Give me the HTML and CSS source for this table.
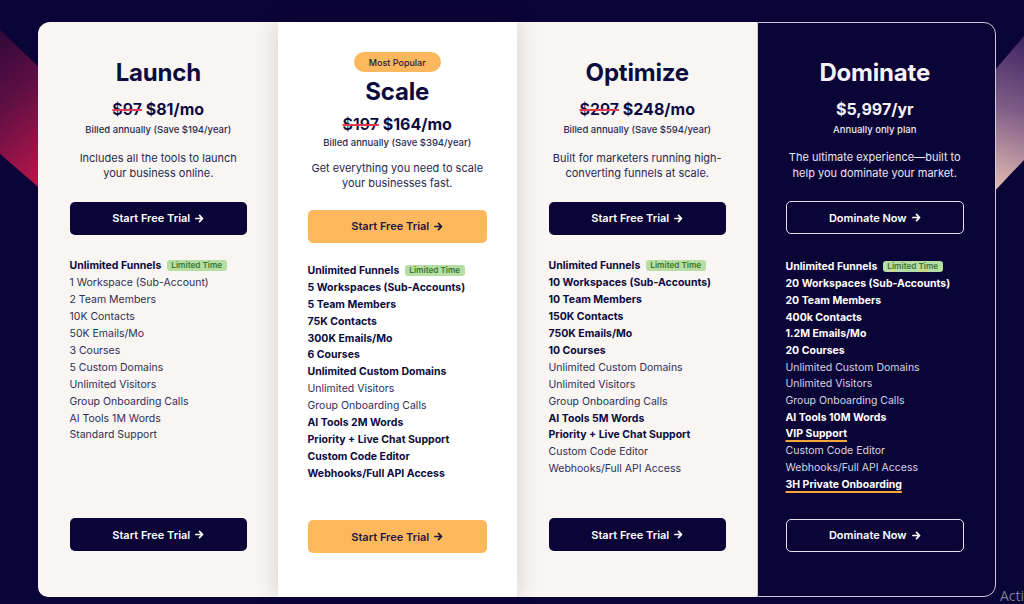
FILE: index.html
```html
<!DOCTYPE html>
<html lang="en">
<head>
<meta charset="utf-8">
<title>Pricing</title>
<link rel="stylesheet" href="styles.css">
</head>
<body>
<div class="deco deco-left"></div>
<div class="deco deco-right"></div>

<main class="plans">
  <section class="plan plan-light">
    <h2 class="plan-title">Launch</h2>
    <p class="price"><s class="old">$97</s> <span class="new">$81/mo</span></p>
    <p class="billed">Billed annually (Save $194/year)</p>
    <p class="desc">Includes all the tools to launch<br>your business online.</p>
    <a class="btn btn-navy" href="#">Start Free Trial <svg class="arrow" viewBox="0 0 10 10"><path d="M1 5h7.2M5 1.6L8.4 5 5 8.4"/></svg></a>
    <ul class="features">
      <li class="b">Unlimited Funnels <span class="badge">Limited Time</span></li>
      <li>1 Workspace (Sub-Account)</li>
      <li>2 Team Members</li>
      <li>10K Contacts</li>
      <li>50K Emails/Mo</li>
      <li>3 Courses</li>
      <li>5 Custom Domains</li>
      <li>Unlimited Visitors</li>
      <li>Group Onboarding Calls</li>
      <li>AI Tools 1M Words</li>
      <li>Standard Support</li>
    </ul>
    <a class="btn btn-navy btn-bottom" href="#">Start Free Trial <svg class="arrow" viewBox="0 0 10 10"><path d="M1 5h7.2M5 1.6L8.4 5 5 8.4"/></svg></a>
  </section>

  <section class="plan plan-popular">
    <span class="pill">Most Popular</span>
    <h2 class="plan-title">Scale</h2>
    <p class="price"><s class="old">$197</s> <span class="new">$164/mo</span></p>
    <p class="billed">Billed annually (Save $394/year)</p>
    <p class="desc">Get everything you need to scale<br>your businesses fast.</p>
    <a class="btn btn-orange" href="#">Start Free Trial <svg class="arrow" viewBox="0 0 10 10"><path d="M1 5h7.2M5 1.6L8.4 5 5 8.4"/></svg></a>
    <ul class="features">
      <li class="b">Unlimited Funnels <span class="badge">Limited Time</span></li>
      <li class="b">5 Workspaces (Sub-Accounts)</li>
      <li class="b">5 Team Members</li>
      <li class="b">75K Contacts</li>
      <li class="b">300K Emails/Mo</li>
      <li class="b">6 Courses</li>
      <li class="b">Unlimited Custom Domains</li>
      <li>Unlimited Visitors</li>
      <li>Group Onboarding Calls</li>
      <li class="b">AI Tools 2M Words</li>
      <li class="b">Priority + Live Chat Support</li>
      <li class="b">Custom Code Editor</li>
      <li class="b">Webhooks/Full API Access</li>
    </ul>
    <a class="btn btn-orange btn-bottom" href="#">Start Free Trial <svg class="arrow" viewBox="0 0 10 10"><path d="M1 5h7.2M5 1.6L8.4 5 5 8.4"/></svg></a>
  </section>

  <section class="plan plan-light">
    <h2 class="plan-title">Optimize</h2>
    <p class="price"><s class="old">$297</s> <span class="new">$248/mo</span></p>
    <p class="billed">Billed annually (Save $594/year)</p>
    <p class="desc">Built for marketers running high-<br>converting funnels at scale.</p>
    <a class="btn btn-navy" href="#">Start Free Trial <svg class="arrow" viewBox="0 0 10 10"><path d="M1 5h7.2M5 1.6L8.4 5 5 8.4"/></svg></a>
    <ul class="features">
      <li class="b">Unlimited Funnels <span class="badge">Limited Time</span></li>
      <li class="b">10 Workspaces (Sub-Accounts)</li>
      <li class="b">10 Team Members</li>
      <li class="b">150K Contacts</li>
      <li class="b">750K Emails/Mo</li>
      <li class="b">10 Courses</li>
      <li>Unlimited Custom Domains</li>
      <li>Unlimited Visitors</li>
      <li>Group Onboarding Calls</li>
      <li class="b">AI Tools 5M Words</li>
      <li class="b">Priority + Live Chat Support</li>
      <li>Custom Code Editor</li>
      <li>Webhooks/Full API Access</li>
    </ul>
    <a class="btn btn-navy btn-bottom" href="#">Start Free Trial <svg class="arrow" viewBox="0 0 10 10"><path d="M1 5h7.2M5 1.6L8.4 5 5 8.4"/></svg></a>
  </section>

  <section class="plan plan-dark">
    <h2 class="plan-title">Dominate</h2>
    <p class="price"><span class="new">$5,997/yr</span></p>
    <p class="billed">Annually only plan</p>
    <p class="desc">The ultimate experience—built to<br>help you dominate your market.</p>
    <a class="btn btn-outline" href="#">Dominate Now <svg class="arrow" viewBox="0 0 10 10"><path d="M1 5h7.2M5 1.6L8.4 5 5 8.4"/></svg></a>
    <ul class="features">
      <li class="b">Unlimited Funnels <span class="badge">Limited Time</span></li>
      <li class="b">20 Workspaces (Sub-Accounts)</li>
      <li class="b">20 Team Members</li>
      <li class="b">400k Contacts</li>
      <li class="b">1.2M Emails/Mo</li>
      <li class="b">20 Courses</li>
      <li>Unlimited Custom Domains</li>
      <li>Unlimited Visitors</li>
      <li>Group Onboarding Calls</li>
      <li class="b">AI Tools 10M Words</li>
      <li class="b"><span class="hl">VIP Support</span></li>
      <li>Custom Code Editor</li>
      <li>Webhooks/Full API Access</li>
      <li class="b"><span class="hl">3H Private Onboarding</span></li>
    </ul>
    <a class="btn btn-outline btn-bottom" href="#">Dominate Now <svg class="arrow" viewBox="0 0 10 10"><path d="M1 5h7.2M5 1.6L8.4 5 5 8.4"/></svg></a>
  </section>
</main>

<div class="watermark">Acti</div>
</body>
</html>
```

FILE: styles.css
```css
* {
  box-sizing: border-box;
  margin: 0;
  padding: 0;
}

html, body {
  width: 1024px;
  height: 604px;
  overflow: hidden;
}

body {
  position: relative;
  background: #0b0437;
  font-family: Inter, "Noto Sans", sans-serif;
  color: #0d0b3e;
}

/* decorative diagonal bands */
.deco {
  position: absolute;
}

.deco-left {
  left: 0;
  top: 28px;
  width: 44px;
  height: 164px;
  clip-path: polygon(0 2px, 44px 44px, 44px 164px, 0 126px);
  background: linear-gradient(140deg, #2e0838 0%, #5e0f44 40%, #c4174a 100%);
}

.deco-right {
  right: 0;
  top: 36px;
  width: 34px;
  height: 160px;
  clip-path: polygon(0 40px, 34px 0, 34px 124px, 0 160px);
  background: linear-gradient(200deg, #3e2462 0%, #7e5c86 45%, #eec6b6 100%);
}

.watermark {
  position: absolute;
  left: 1000px;
  top: 586px;
  font-family: "Open Sans", sans-serif;
  font-size: 14px;
  color: #7d7b8c;
  white-space: nowrap;
}

/* plans */
.plans {
  position: relative;
  display: flex;
  width: 958px;
  height: 575px;
  margin: 22px 0 0 38px;
}

.plan {
  flex: 0 0 25%;
  display: flex;
  flex-direction: column;
  align-items: center;
  text-align: center;
  padding: 36px 30.5px 46px 31.5px;
}

.plan-light {
  background: #f8f5f2;
}

.plan-light:first-child {
  border-radius: 12px 0 0 10px;
}

.plan-popular {
  position: relative;
  z-index: 1;
  background: #ffffff;
  padding: 30px 30px 44px;
  box-shadow: 0 0 22px rgba(30, 20, 50, 0.16);
}

.plan-dark {
  background: #0b0437;
  color: #f4f2f7;
  border: 1.5px solid #cfc8d8;
  border-radius: 0 12px 12px 0;
  padding: 34.5px 31px 44.5px 28px;
}

.pill {
  display: inline-flex;
  align-items: center;
  height: 20px;
  padding: 0 15px;
  border-radius: 10px;
  background: #fdb85e;
  font-size: 9px;
  font-weight: 500;
  color: #1c1740;
}

.plan-title {
  font-size: 24px;
  line-height: 30px;
  font-weight: 700;
  letter-spacing: -0.2px;
}

.plan-popular .plan-title {
  margin-top: 5px;
}

.price {
  margin-top: 10px;
  font-size: 16px;
  line-height: 22px;
  font-weight: 700;
}

.plan-popular .price {
  margin-top: 6px;
}

.old {
  font-weight: 600;
  text-decoration: line-through;
  text-decoration-color: #e33a55;
  text-decoration-thickness: 1.5px;
}

.billed {
  margin-top: 3px;
  font-size: 9.5px;
  line-height: 14px;
  font-weight: 500;
  color: #2c2a52;
}

.plan-popular .billed {
  margin-top: 1px;
}

.desc {
  margin-top: 13.5px;
  font-size: 11px;
  line-height: 15.7px;
  color: #2a2850;
}

.plan-popular .desc {
  margin-top: 10.5px;
}

.plan-dark .billed,
.plan-dark .desc {
  color: #e9e7ef;
}

.btn {
  display: flex;
  align-items: center;
  justify-content: center;
  gap: 5px;
  width: 100%;
  height: 33px;
  margin-top: 20px;
  border-radius: 5px;
  font-size: 11px;
  font-weight: 600;
  text-decoration: none;
}

.plan-popular .btn {
  margin-top: 18px;
}

.btn-navy {
  background: #0b0437;
  color: #ffffff;
}

.btn-orange {
  background: #fdb85e;
  color: #1c1740;
}

.btn-outline {
  border: 1.5px solid #e6e2ec;
  color: #ffffff;
}

.btn .arrow {
  width: 9px;
  height: 9px;
  fill: none;
  stroke: currentColor;
  stroke-width: 1.9;
  stroke-linecap: round;
  stroke-linejoin: round;
}

.plan .btn-bottom {
  margin-top: auto;
}

.features {
  align-self: stretch;
  list-style: none;
  text-align: left;
  margin-top: 23.5px;
  font-size: 10.5px;
  line-height: 16.9px;
  color: #302e57;
}

.plan-popular .features {
  margin-top: 20px;
}

.plan-dark .features {
  margin-top: 25px;
  line-height: 16.7px;
  color: #d6d4e2;
}

.features .b {
  font-weight: 700;
  color: #0d0b3e;
}

.plan-dark .features .b {
  color: #ffffff;
}

.badge {
  display: inline-block;
  margin-left: 3px;
  padding: 0 4.5px;
  height: 11px;
  line-height: 11px;
  border-radius: 3px;
  background: #b6dea2;
  color: #3a7731;
  font-size: 8.2px;
  font-weight: 600;
  vertical-align: 1px;
}

.hl {
  text-decoration: underline;
  text-decoration-color: #f5a53a;
  text-decoration-thickness: 2px;
  text-underline-offset: 3px;
}
```
